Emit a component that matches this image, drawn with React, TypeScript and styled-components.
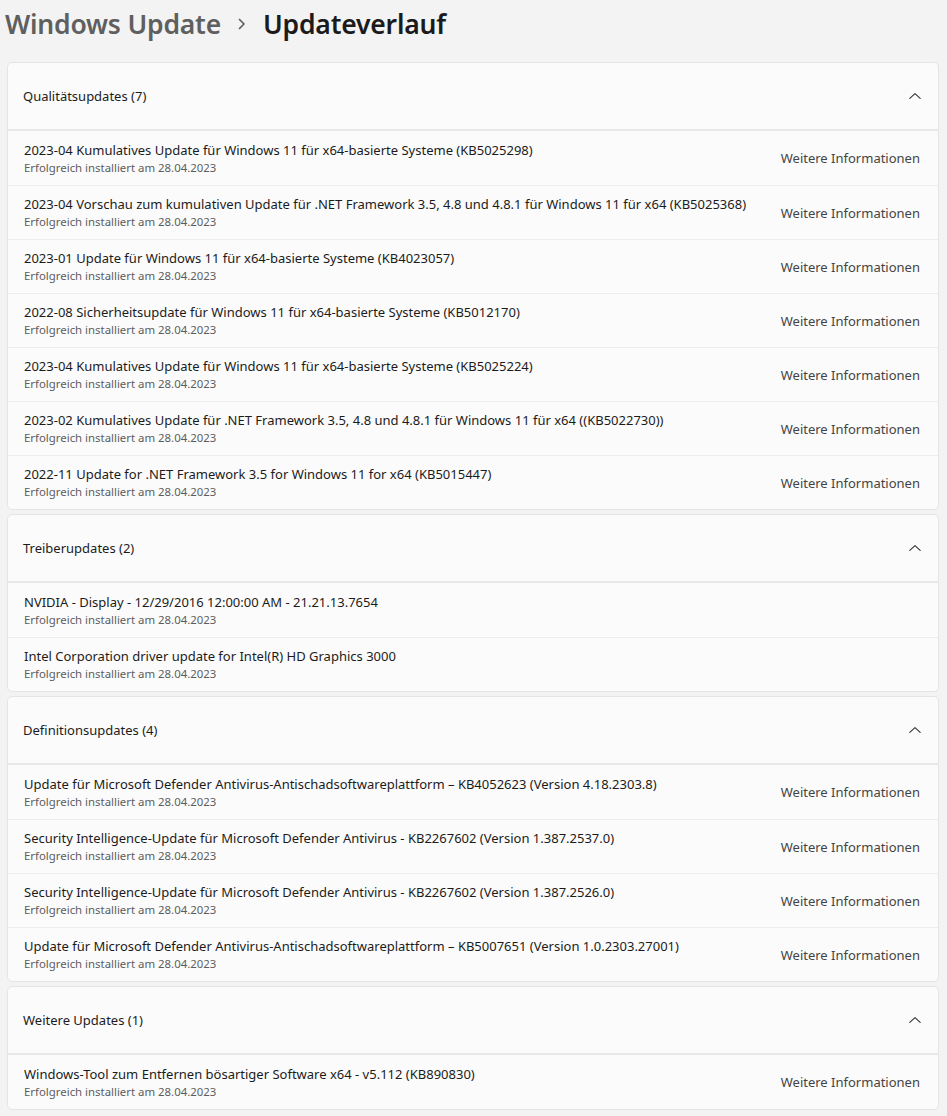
import React from "react";
import styled, { createGlobalStyle } from "styled-components";

const GlobalStyle = createGlobalStyle`
  html, body {
    margin: 0;
    padding: 0;
    background: #f3f3f3;
  }
  body {
    font-family: "Segoe UI", "Noto Sans", "Open Sans", sans-serif;
    color: #1b1b1b;
    -webkit-font-smoothing: antialiased;
  }
`;

const Page = styled.div`
  width: 947px;
  box-sizing: border-box;
  padding: 0 8px 8px 7px;
  display: flex;
  flex-direction: column;
`;

const Breadcrumb = styled.h1`
  margin: 0;
  height: 62px;
  display: flex;
  align-items: flex-start;
  padding-top: 4px;
  box-sizing: border-box;
  font-size: 26.5px;
  font-weight: 600;
  line-height: 40px;
  margin-left: -2px;
  letter-spacing: -0.2px;
`;

const Crumb = styled.span<{ $current?: boolean }>`
  color: ${(p) => (p.$current ? "#1b1b1b" : "#5f5f5f")};
`;

const CrumbSep = styled.span`
  display: inline-flex;
  align-items: center;
  height: 40px;
  margin: 0 16px 0 16px;
  color: #5f5f5f;
`;

const Sections = styled.div`
  display: flex;
  flex-direction: column;
  gap: 4px;
`;

const Card = styled.section`
  background: #fbfbfb;
  border: 1px solid #e5e5e5;
  border-radius: 5px;
  overflow: hidden;
`;

const CardHeader = styled.div`
  height: 66px;
  display: flex;
  align-items: center;
  justify-content: space-between;
  padding: 0 16px 0 15px;
  border-bottom: 2px solid #e8e8e8;
`;

const HeaderLabel = styled.span`
  font-size: 13px;
  color: #1b1b1b;
`;

const Chevron = styled.span`
  display: inline-flex;
  color: #333;
`;

const Row = styled.div`
  height: 54px;
  box-sizing: border-box;
  display: flex;
  align-items: center;
  justify-content: space-between;
  padding: 0 18px 0 16px;
  & + & {
    border-top: 1px solid #ededed;
  }
`;

const RowText = styled.div`
  display: flex;
  flex-direction: column;
`;

const RowTitle = styled.span`
  font-size: 13px;
  line-height: 18px;
  color: #1b1b1b;
`;

const RowSub = styled.span`
  font-size: 11.4px;
  line-height: 17px;
  color: #5d5d5d;
`;

const MoreLink = styled.span`
  font-size: 13px;
  color: #444;
  white-space: nowrap;
`;

type Item = { title: string; more?: boolean };
type Section = { label: string; items: Item[] };

const DATE = "Erfolgreich installiert am 28.04.2023";

const sections: Section[] = [
  {
    label: "Qualitätsupdates (7)",
    items: [
      { title: "2023-04 Kumulatives Update für Windows 11 für x64-basierte Systeme (KB5025298)", more: true },
      { title: "2023-04 Vorschau zum kumulativen Update für .NET Framework 3.5, 4.8 und 4.8.1 für Windows 11 für x64 (KB5025368)", more: true },
      { title: "2023-01 Update für Windows 11 für x64-basierte Systeme (KB4023057)", more: true },
      { title: "2022-08 Sicherheitsupdate für Windows 11 für x64-basierte Systeme (KB5012170)", more: true },
      { title: "2023-04 Kumulatives Update für Windows 11 für x64-basierte Systeme (KB5025224)", more: true },
      { title: "2023-02 Kumulatives Update für .NET Framework 3.5, 4.8 und 4.8.1 für Windows 11 für x64 ((KB5022730))", more: true },
      { title: "2022-11 Update for .NET Framework 3.5 for Windows 11 for x64 (KB5015447)", more: true },
    ],
  },
  {
    label: "Treiberupdates (2)",
    items: [
      { title: "NVIDIA - Display - 12/29/2016 12:00:00 AM - 21.21.13.7654" },
      { title: "Intel Corporation driver update for Intel(R) HD Graphics 3000" },
    ],
  },
  {
    label: "Definitionsupdates (4)",
    items: [
      { title: "Update für Microsoft Defender Antivirus-Antischadsoftwareplattform – KB4052623 (Version 4.18.2303.8)", more: true },
      { title: "Security Intelligence-Update für Microsoft Defender Antivirus - KB2267602 (Version 1.387.2537.0)", more: true },
      { title: "Security Intelligence-Update für Microsoft Defender Antivirus - KB2267602 (Version 1.387.2526.0)", more: true },
      { title: "Update für Microsoft Defender Antivirus-Antischadsoftwareplattform – KB5007651 (Version 1.0.2303.27001)", more: true },
    ],
  },
  {
    label: "Weitere Updates (1)",
    items: [
      { title: "Windows-Tool zum Entfernen bösartiger Software x64 - v5.112 (KB890830)", more: true },
    ],
  },
];

const ChevronUp = () => (
  <svg width="14" height="14" viewBox="0 0 14 14" fill="none">
    <path d="M1.8 9.4 L7 4.6 L12.2 9.4" stroke="currentColor" strokeWidth="1.1" strokeLinecap="round" strokeLinejoin="round" />
  </svg>
);

const ChevronRight = () => (
  <svg width="10" height="12" viewBox="0 0 10 12" fill="none">
    <path d="M2.5 1.5 L7 6 L2.5 10.5" stroke="currentColor" strokeWidth="1.7" strokeLinecap="round" strokeLinejoin="round" />
  </svg>
);

export default function App() {
  return (
    <>
      <GlobalStyle />
      <Page>
        <Breadcrumb>
          <Crumb>Windows Update</Crumb>
          <CrumbSep>
            <ChevronRight />
          </CrumbSep>
          <Crumb $current>Updateverlauf</Crumb>
        </Breadcrumb>
        <Sections>
          {sections.map((s) => (
            <Card key={s.label}>
              <CardHeader>
                <HeaderLabel>{s.label}</HeaderLabel>
                <Chevron>
                  <ChevronUp />
                </Chevron>
              </CardHeader>
              {s.items.map((it, i) => (
                <Row key={i}>
                  <RowText>
                    <RowTitle>{it.title}</RowTitle>
                    <RowSub>{DATE}</RowSub>
                  </RowText>
                  {it.more && <MoreLink>Weitere Informationen</MoreLink>}
                </Row>
              ))}
            </Card>
          ))}
        </Sections>
      </Page>
    </>
  );
}
